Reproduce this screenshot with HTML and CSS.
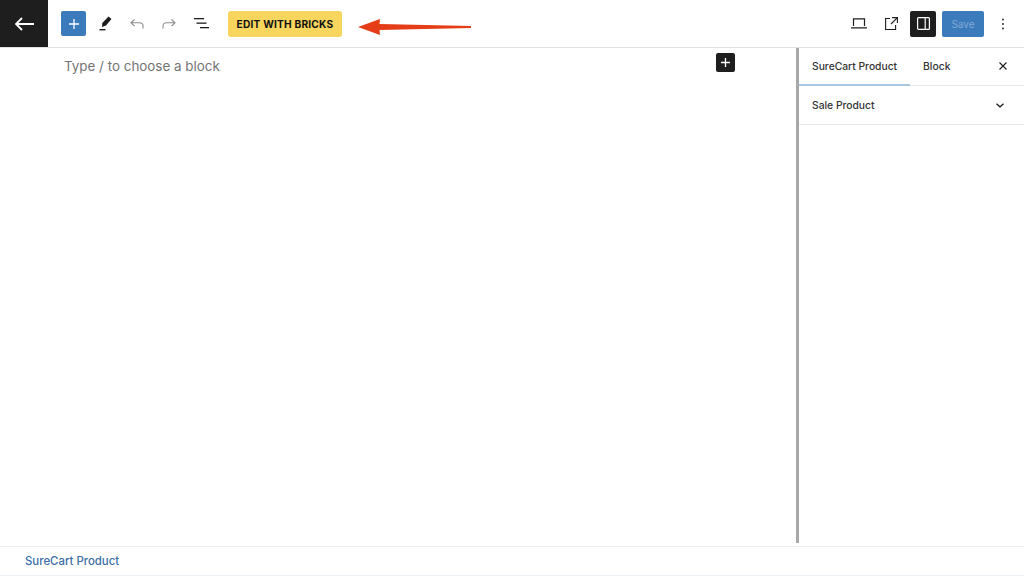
FILE: index.html
```html
<!DOCTYPE html>
<html lang="en">
<head>
    <meta charset="UTF-8">
    <meta name="viewport" content="width=device-width, initial-scale=1.0">
    <title>Edit Product</title>
    <link rel="stylesheet" href="styles.css">
</head>
<body>
    <header class="top-bar">
        <a class="back-button" href="#">
            <svg width="20" height="14" viewBox="0 0 20 14" fill="none" stroke="#fff" stroke-width="1.800">
                <path d="M20 7H2M8 1L2 7l6 6"/>
            </svg>
        </a>
        <div class="tools">
            <button class="inserter">
                <svg width="10" height="10" viewBox="0 0 10 10" fill="none" stroke="#fff" stroke-width="1.300">
                    <path d="M5 0v10M0 5h10"/>
                </svg>
            </button>
            <button class="icon-button">
                <svg width="13" height="15" viewBox="0 0 13 15" fill="#1e1e1e">
                    <path d="M9.500 0.500l3 2.500-5.500 6.500-4 1.500 0.300-4z"/>
                    <rect x="0.500" y="13" width="6" height="1.400"/>
                </svg>
            </button>
            <button class="icon-button muted">
                <svg width="14" height="10" viewBox="0 0 14 10" fill="none" stroke="#8d8d8d" stroke-width="1.100">
                    <path d="M4.500 0.500L1 3.800l3.500 3.200M1 3.800H9.500c2 0 3.500 1.300 3.500 3V9.500"/>
                </svg>
            </button>
            <button class="icon-button muted">
                <svg width="14" height="10" viewBox="0 0 14 10" fill="none" stroke="#8d8d8d" stroke-width="1.100">
                    <path d="M9.500 0.500L13 3.800 9.500 7M13 3.800H4.500c-2 0-3.500 1.300-3.500 3V9.500"/>
                </svg>
            </button>
            <button class="icon-button">
                <svg width="15" height="11" viewBox="0 0 15 11" fill="#1e1e1e">
                    <rect x="0" y="0" width="10" height="1.300"/>
                    <rect x="2.500" y="4.500" width="10" height="1.300"/>
                    <rect x="6" y="9" width="9" height="1.300"/>
                </svg>
            </button>
            <button class="bricks-button">EDIT WITH BRICKS</button>
            <svg class="arrow" width="114" height="18" viewBox="0 0 114 18">
                <path d="M0 9L22 1 21.500 6 113 8V10L21.500 12 22 17z" fill="#e43d17"/>
            </svg>
        </div>
        <div class="actions">
            <button class="icon-button">
                <svg width="16" height="11" viewBox="0 0 16 11" fill="none" stroke="#1e1e1e" stroke-width="1.200">
                    <path d="M2.500 8V0.800h11V8M0 9.800h16"/>
                </svg>
            </button>
            <button class="icon-button">
                <svg width="13" height="13" viewBox="0 0 13 13" fill="none" stroke="#1e1e1e" stroke-width="1.100">
                    <path d="M5 1.500H0.600v11h10V8M7 0.600h5.400V6M12.400 0.600L6 7"/>
                </svg>
            </button>
            <button class="settings-toggle">
                <svg width="13" height="13" viewBox="0 0 13 13" fill="none" stroke="#fff" stroke-width="1.200">
                    <rect x="0.600" y="0.600" width="11.800" height="11.800" rx="1"/>
                    <path d="M8.200 1v11"/>
                </svg>
            </button>
            <button class="save-button">Save</button>
            <button class="icon-button more">
                <svg width="4" height="12" viewBox="0 0 4 12" fill="#1e1e1e">
                    <circle cx="2" cy="1.500" r="0.900"/>
                    <circle cx="2" cy="6" r="0.900"/>
                    <circle cx="2" cy="10.500" r="0.900"/>
                </svg>
            </button>
        </div>
    </header>

    <div class="main">
        <div class="editor">
            <p class="placeholder">Type / to choose a block</p>
            <button class="block-add">
                <svg width="9" height="9" viewBox="0 0 9 9" fill="none" stroke="#fff" stroke-width="1.300">
                    <path d="M4.500 0v9M0 4.500h9"/>
                </svg>
            </button>
        </div>
        <aside class="sidebar">
            <div class="tabs">
                <span class="tab active">SureCart Product</span>
                <span class="tab">Block</span>
                <svg class="close" width="8" height="8" viewBox="0 0 8 8" fill="none" stroke="#1e1e1e" stroke-width="1.100">
                    <path d="M0.500 0.500l7 7M7.500 0.500l-7 7"/>
                </svg>
            </div>
            <div class="panel">
                <span>Sale Product</span>
                <svg width="8" height="5" viewBox="0 0 8 5" fill="none" stroke="#1e1e1e" stroke-width="1.300">
                    <path d="M0.500 0.800L4 3.800l3.500-3"/>
                </svg>
            </div>
        </aside>
    </div>

    <footer class="breadcrumb"><a href="#">SureCart Product</a></footer>
</body>
</html>
```

FILE: styles.css
```css
* {
    box-sizing: border-box;
}
html, body {
    height: 100%;
}
body {
    margin: 0;
    display: flex;
    flex-direction: column;
    font-family: Inter, 'Liberation Sans', Arial, sans-serif;
    color: #333333;
    background-color: #ffffff;
    overflow: hidden;
}
button {
    border: none;
    padding: 0;
    background: none;
    font-family: inherit;
    display: flex;
    align-items: center;
    justify-content: center;
}
.top-bar {
    display: flex;
    align-items: center;
    height: 48px;
    flex-shrink: 0;
    border-bottom: 1px solid #e2e2e2;
}
.back-button {
    width: 48px;
    height: 47px;
    background-color: #1e1e1e;
    display: flex;
    align-items: center;
    justify-content: center;
}
.tools {
    display: flex;
    align-items: center;
    margin-left: 13px;
}
.inserter {
    width: 25px;
    height: 25px;
    border-radius: 2px;
    background-color: #3b7abb;
}
.icon-button {
    width: 32px;
    height: 32px;
}
.inserter + .icon-button {
    margin-left: 3px;
}
.bricks-button {
    width: 114px;
    height: 26px;
    margin-left: 11px;
    border-radius: 3px;
    background-color: #f8d65e;
    color: #111111;
    font-size: 10.200px;
    font-weight: 700;
    letter-spacing: 0.2px;
}
.arrow {
    margin-left: 16px;
    margin-top: 7px;
}
.actions {
    display: flex;
    align-items: center;
    margin-left: auto;
    padding-right: 5px;
}
.settings-toggle {
    width: 26px;
    height: 26px;
    margin-left: 3px;
    border-radius: 2px;
    background-color: #1e1e1e;
}
.save-button {
    width: 42px;
    height: 26px;
    margin-left: 6px;
    border-radius: 2px;
    background-color: #3b7abb;
    color: #7faad6;
    font-size: 10px;
}
.more {
    margin-left: 3px;
}
.main {
    flex: 1;
    display: flex;
    min-height: 0;
}
.editor {
    flex: 1;
    position: relative;
    padding: 8px 64px;
}
.placeholder {
    margin: 0;
    font-size: 13.400px;
    line-height: 20px;
    color: #757575;
}
.block-add {
    position: absolute;
    top: 5px;
    left: 716px;
    width: 19px;
    height: 19px;
    border-radius: 2px;
    background-color: #1e1e1e;
}
.sidebar {
    width: 228px;
    margin-bottom: 3px;
    border-left: 3px solid #a8a8a8;
    background-color: #ffffff;
}
.tabs {
    display: flex;
    align-items: center;
    height: 38px;
    border-bottom: 1px solid #e6e6e6;
    font-size: 10.300px;
    font-weight: 500;
}
.tab {
    height: 38px;
    padding: 0 13px;
    line-height: 36px;
}
.tab.active {
    box-shadow: inset 0 -2px 0 #a9c6e2;
}
.close {
    margin-left: auto;
    margin-right: 17px;
    margin-bottom: 1px;
}
.panel {
    display: flex;
    align-items: center;
    justify-content: space-between;
    height: 39px;
    padding: 0 20px 0 13px;
    border-bottom: 1px solid #e6e6e6;
    font-size: 10.300px;
    font-weight: 500;
}
.breadcrumb {
    height: 30px;
    flex-shrink: 0;
    display: flex;
    align-items: center;
    padding: 0 25px;
    border-top: 1px solid #ececec;
    border-bottom: 1px solid #eef3f8;
    font-size: 11.400px;
    font-weight: 500;
}
.breadcrumb a {
    color: #3b6ea8;
    text-decoration: none;
}
```
